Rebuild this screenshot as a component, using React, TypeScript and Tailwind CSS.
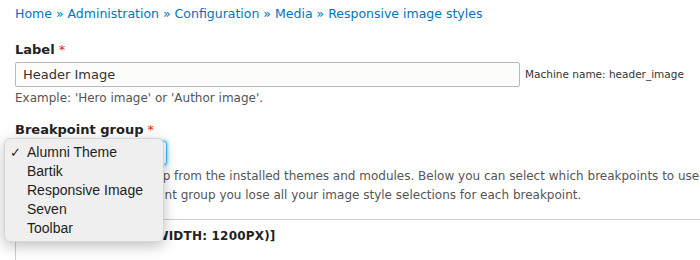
import React from 'react';

const font = { fontFamily: '"DejaVu Sans", Verdana, sans-serif' };

const crumbs = ['Home', 'Administration', 'Configuration', 'Media', 'Responsive image styles'];
const groups = ['Alumni Theme', 'Bartik', 'Responsive Image', 'Seven', 'Toolbar'];

const Required = () => <span className="ml-1 text-[#e32700] font-normal">*</span>;

const BreakpointMenu = () => (
  <div className="absolute left-[4px] top-[138px] w-[160px] h-[104px] rounded-[6px] bg-[#efefef] shadow-[0_4px_14px_rgba(0,0,0,0.25)] border border-[#d6d6d6] py-[4px] font-['Liberation_Sans',Arial,sans-serif] text-[14px] text-[#1e1e1e] leading-[19px]">
    {groups.map((g, i) => (
      <div key={g} className="flex items-center h-[19px]">
        <span className="w-[22px] pl-[5px] text-[13px]">{i === 0 ? '✓' : ''}</span>
        <span>{g}</span>
      </div>
    ))}
  </div>
);

export default function App() {
  return (
    <div className="relative w-[700px] h-[260px] overflow-hidden bg-white text-[#222]" style={font}>
      <div className="px-[15px] pt-[5px] text-[12.5px] leading-[18px] text-[#0074bd] whitespace-nowrap">
        {crumbs.map((c, i) => (
          <span key={c}>
            {i > 0 && <span className="text-[#0074bd]"> » </span>}
            <a className="text-[#0074bd]">{c}</a>
          </span>
        ))}
      </div>

      <div className="px-[15px] pt-[18px]">
        <div className="text-[13px] font-bold leading-[17px]">
          Label<Required />
        </div>
        <div className="flex items-center mt-[4px]">
          <div className="w-[505px] h-[25px] rounded-[2px] border border-[#b8b8b8] bg-[#fcfcfa] px-[7px] flex items-center text-[13px] text-[#333]">
            Header Image
          </div>
          <span className="ml-[5px] text-[10.5px] text-[#333]">Machine name: header_image</span>
        </div>
        <div className="mt-[3px] text-[12px] leading-[17px] text-[#555]">
          Example: 'Hero image' or 'Author image'.
        </div>
      </div>

      <div className="px-[15px] pt-[14px]">
        <div className="text-[13px] font-bold leading-[17px]">
          Breakpoint group<Required />
        </div>
        <div className="mt-[3px] w-[152px] h-[24px] rounded-[3px] border border-[#40b6ff] shadow-[0_0_3px_1px_rgba(64,182,255,0.6)] bg-white" />
        <div className="mt-[2px] text-[12px] leading-[19px] text-[#555] whitespace-nowrap">
          <div>Select a breakpoint group from the installed themes and modules. Below you can select which breakpoints to use for this</div>
          <div>you change the breakpoint group you lose all your image style selections for each breakpoint.</div>
        </div>
      </div>

      <div className="ml-[15px] mt-[14px] border-t border-l border-[#ccc] h-[60px] pt-[7px] pl-[10px]">
        <div className="text-[12px] font-bold uppercase tracking-[0.2px] text-[#222] whitespace-nowrap">
          1x [all and (min-width: 1200px)]
        </div>
      </div>

      <BreakpointMenu />
    </div>
  );
}
